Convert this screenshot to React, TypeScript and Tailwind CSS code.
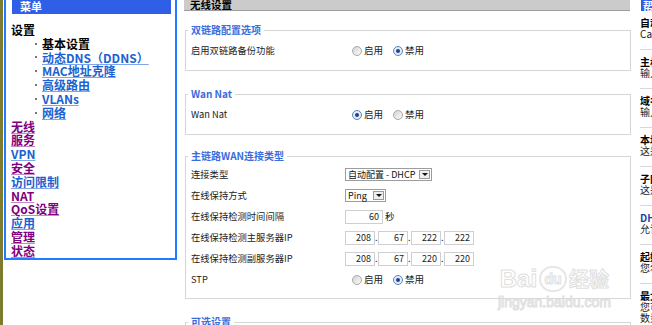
const menuSub = [
  { label: "动态DNS（DDNS）", href: true },
  { label: "MAC地址克隆", href: true },
  { label: "高级路由", href: true },
  { label: "VLANs", href: true },
  { label: "网络", href: true },
];

const menuTop = [
  { label: "无线", visited: true },
  { label: "服务", visited: true },
  { label: "VPN", visited: false },
  { label: "安全", visited: true },
  { label: "访问限制", visited: false },
  { label: "NAT", visited: true },
  { label: "QoS设置", visited: true },
  { label: "应用", visited: false },
  { label: "管理", visited: true },
  { label: "状态", visited: true },
];

const helpItems = [
  { title: "自动配置 - DHCP:", desc: "Cable 用户请选择此项", blue: false },
  { title: "主机名:", desc: "输入您的 ISP 提供的主机名", blue: false },
  { title: "域名:", desc: "输入您的 ISP 提供的域名", blue: false },
  { title: "本地IP地址:", desc: "这是路由器的地址", blue: false },
  { title: "子网掩码:", desc: "这是路由器的子网掩码", blue: false },
  { title: "DHCP服务器:", desc: "允许路由器管理您的IP地址", blue: true },
  { title: "起始IP地址:", desc: "您希望开始的地址", blue: false },
];

function Radio({ on }: { on?: boolean }) {
  return (
    <span
      className={
        on
          ? "inline-flex h-[10px] w-[10px] items-center justify-center rounded-full border border-[#5b84bd] bg-[#e4ecf7]"
          : "inline-flex h-[10px] w-[10px] items-center justify-center rounded-full border border-[#a9a9a9] bg-[linear-gradient(135deg,#d4d4d4,#fbfbfb)]"
      }
    >
      {on && <span className="h-[4px] w-[4px] rounded-full bg-[#1d418e]" />}
    </span>
  );
}

function RadioPair({ enabled }: { enabled: boolean }) {
  return (
    <div className="flex items-center pl-[7px] text-[9.5px] text-[#222]">
      <Radio on={enabled} />
      <span className="ml-[2px]">启用</span>
      <span className="ml-[10px] flex">
        <Radio on={!enabled} />
      </span>
      <span className="ml-[2px]">禁用</span>
    </div>
  );
}

function Row({ label, children }: { label: string; children: React.ReactNode }) {
  return (
    <div className="flex h-[21px] items-center pl-[3px]">
      <div className="w-[154px] text-[9.3px] text-[#222]">{label}</div>
      {children}
    </div>
  );
}

function Select({ text, w }: { text: string; w: string }) {
  return (
    <div className={`flex h-[13px] items-center justify-between border border-[#9c9c9c] bg-white pl-[2px] pr-[1px] text-[9px] text-[#111] ${w}`}>
      <span className="leading-none">{text}</span>
      <span className="flex h-[9px] w-[11px] items-center justify-center border border-[#9a9a9a] bg-[#eeeeee]">
        <span className="h-0 w-0 border-x-[3px] border-t-[3px] border-x-transparent border-t-[#111]" />
      </span>
    </div>
  );
}

function Box({ v, w = "w-[30px]" }: { v: string; w?: string }) {
  return (
    <div className={`flex h-[14px] items-center justify-end border border-[#cfcfcf] pr-[3px] text-[9px] text-[#222] ${w}`}>
      {v}
    </div>
  );
}

function Ip({ parts }: { parts: string[] }) {
  return (
    <div className="flex items-center">
      {parts.map((p, i) => (
        <div key={i} className="flex items-center">
          <Box v={p} />
          {i < 3 && <span className="w-[3px] text-[9px] leading-none text-[#222]">.</span>}
        </div>
      ))}
    </div>
  );
}

function Legend({ children }: { children: React.ReactNode }) {
  return (
    <legend className="px-[3px] text-[10px] font-bold leading-[12px] text-[#3a6ddc]">{children}</legend>
  );
}

export default function App() {
  return (
    <div className="relative flex h-[325px] w-[652px] overflow-hidden bg-white font-['Liberation_Sans','Noto_Sans_CJK_SC',sans-serif]">
      {/* olive edge */}
      <div className="w-[3px] shrink-0 bg-[#7c7b2e]" />

      {/* Menu */}
      <div className="ml-[1px] w-[173px] shrink-0 self-start border-x-2 border-b-2 border-[#1f7bff] font-['Noto_Sans_CJK_SC',sans-serif] text-[12px] font-bold leading-[13.8px]">
        <div className="ml-[6px] mr-[4px] flex h-[14px] items-center bg-[#2f5fe6] pl-[8px] text-[11px] text-white">菜单</div>
        <div className="pl-[5px] pt-[9px]">
          <div className="text-black">设置</div>
          <ul>
            <li className="flex items-center">
              <span className="ml-[24px] mr-[5px] h-[2px] w-[2px] bg-[#777]" />
              <span className="text-black">基本设置</span>
            </li>
            {menuSub.map((m) => (
              <li key={m.label} className="flex items-center">
                <span className="ml-[24px] mr-[5px] h-[2px] w-[2px] bg-[#777]" />
                <a className="text-[#1b62d0] underline decoration-[#7fa6e6]">{m.label}</a>
              </li>
            ))}
          </ul>
          {menuTop.map((m) => (
            <div key={m.label}>
              <a
                className={
                  m.visited
                    ? "text-[#800080] underline decoration-[#c58ac5]"
                    : "text-[#1b62d0] underline decoration-[#7fa6e6]"
                }
              >
                {m.label}
              </a>
            </div>
          ))}
        </div>
      </div>

      {/* Main settings */}
      <div className="ml-[7px] w-[447px] shrink-0 font-['Noto_Sans_CJK_SC',sans-serif]">
        <div className="mr-[1px] flex h-[11px] items-center border-b border-[#9d9d9d] bg-[#cbcbcb] pl-[6px] text-[10.5px] font-bold leading-none text-black">
          无线设置
        </div>

        <fieldset className="ml-[1px] mt-[13px] border border-[#d6d6d6] pb-[9px] pl-[2px] pt-[4px]">
          <Legend>双链路配置选项</Legend>
          <Row label="启用双链路备份功能">
            <RadioPair enabled={false} />
          </Row>
        </fieldset>

        <fieldset className="ml-[1px] mt-[17px] border border-[#d6d6d6] pb-[9px] pl-[2px] pt-[4px]">
          <Legend>Wan Nat</Legend>
          <Row label="Wan Nat">
            <RadioPair enabled={true} />
          </Row>
        </fieldset>

        <fieldset className="ml-[1px] mt-[15px] border border-[#d6d6d6] pb-[8px] pl-[2px] pt-[2px]">
          <Legend>主链路WAN连接类型</Legend>
          <Row label="连接类型">
            <Select text="自动配置  - DHCP" w="w-[87px]" />
          </Row>
          <Row label="在线保持方式">
            <Select text="Ping" w="w-[41px]" />
          </Row>
          <Row label="在线保持检测时间间隔">
            <Box v="60" w="w-[38px]" />
            <span className="ml-[2px] text-[9.5px] text-[#222]">秒</span>
          </Row>
          <Row label="在线保持检测主服务器IP">
            <Ip parts={["208", "67", "222", "222"]} />
          </Row>
          <Row label="在线保持检测副服务器IP">
            <Ip parts={["208", "67", "220", "220"]} />
          </Row>
          <Row label="STP">
            <RadioPair enabled={false} />
          </Row>
        </fieldset>

        <fieldset className="ml-[1px] mt-[17px] h-[40px] border border-[#d6d6d6] pl-[2px]">
          <Legend>可选设置</Legend>
        </fieldset>
      </div>

      {/* Help column */}
      <div className="ml-[9px] w-[160px] shrink-0 overflow-hidden font-['Noto_Sans_CJK_SC',sans-serif]">
        <div className="ml-[1px] flex h-[11px] items-center bg-[#2f5fe6] pl-[2px] text-[10px] font-bold text-white">帮助</div>
        {helpItems.map((h) => (
          <div key={h.title} className="whitespace-nowrap border-b border-[#d8d8d8] pb-[10px] pt-[6px] text-[10px] leading-[11px]">
            <div className={h.blue ? "font-bold text-[#1b3fa0]" : "font-bold text-black"}>{h.title}</div>
            <div className="text-[#222]">{h.desc}</div>
          </div>
        ))}
        <div className="whitespace-nowrap pt-[6px] text-[10px] leading-[11px]">
          <div className="font-bold text-black">最大DHCP用户数:</div>
          <div className="text-[#222]">您可以设置</div>
          <div className="text-[#222]">数量</div>
        </div>
      </div>

      {/* watermark */}
      <div className="pointer-events-none absolute left-[498px] top-[266px] flex flex-col items-center text-white/70 [-webkit-text-stroke:1px_#e0e0e0]">
        <div className="flex items-center font-['Liberation_Sans',sans-serif] text-[24px] font-bold leading-none">
          <span>Bai</span>
          <span className="mx-[2px] flex h-[26px] w-[28px] items-center justify-center rounded-full border-2 border-[#e6e6e6] text-[14px]">du</span>
          <span className="font-['Noto_Sans_CJK_SC',sans-serif] text-[20px]">经验</span>
        </div>
        <div className="mt-[3px] font-['Liberation_Sans',sans-serif] text-[14px] leading-none">jingyan.baidu.com</div>
      </div>
    </div>
  );
}
